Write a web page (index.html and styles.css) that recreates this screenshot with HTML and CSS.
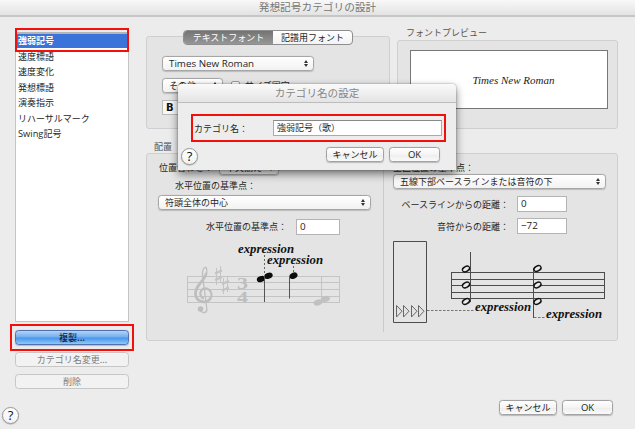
FILE: index.html
```html
<!DOCTYPE html>
<html lang="ja">
<head>
<meta charset="utf-8">
<title>発想記号カテゴリの設計</title>
<link rel="stylesheet" href="styles.css">
</head>
<body>
<div class="window">
  <header class="titlebar">発想記号カテゴリの設計</header>
  <div class="content">
    <aside class="sidebar">
      <ul class="list">
        <li class="selected">強弱記号</li><li>速度標語</li><li>速度変化</li><li>発想標語</li><li>演奏指示</li><li>リハーサルマーク</li><li><span class="latin">Swing</span>記号</li>
      </ul>
      <button class="btn primary">複製...</button>
      <button class="btn disabled">カテゴリ名変更...</button>
      <button class="btn disabled">削除</button>
    </aside>
    <main class="main">
      <div class="top">
        <section class="panel font-panel">
          <div class="tabs"><span class="tab active">テキストフォント</span><span class="tab">記譜用フォント</span></div>
          <div class="select font-name"><span class="latin">Times New Roman</span><i class="arrows"></i></div>
          <div class="row size-row"><div class="select size">その他<i class="arrows"></i></div><span class="check"></span><span>サイズ固定</span></div>
          <div class="bold">B</div>
        </section>
        <section class="preview">
          <h2 class="caption">フォントプレビュー</h2>
          <div class="panel preview-panel"><div class="sample">Times New Roman</div></div>
        </section>
      </div>
      <h2 class="caption placement-caption">配置</h2>
      <section class="panel placement">
        <div class="left-col">
          <div class="row align-row"><span>位置合わせ：</span><div class="select align">中央揃え<i class="arrows"></i></div></div>
          <div class="row hlabel">水平位置の基準点：</div>
          <div class="select anchor">符頭全体の中心<i class="arrows"></i></div>
          <div class="row hoffset"><span>水平位置の基準点：</span><span class="field">0</span></div>
          <svg class="score" width="163" height="80" viewBox="182 240 163 80">
            <g fill="none" stroke="#c4c4c4">
              <path d="M187.5 277.5H339.5M187.5 283.5H339.5M187.5 290.5H339.5M187.5 297.5H339.5M187.5 303.5H339.5M187.5 277V304M339.5 277V304M321.5 277V303"/>
              <path d="M216.5 269V286M220.5 267V284M223.5 279V295M227.500 277V293"/>
              <path stroke-width="2.200" d="M215 274.500L222 271.500M215 281L222 278M222 285L229 282M222 291.500L229 288.500"/>
            </g>
            <g fill="none" stroke="#bebebe" stroke-linecap="round">
              <path stroke-width="1.300" d="M207 311C206 315 201 314 200 311M207 311L202.500 276C202 271 204 268 206 268.500C208 271 207 276 203.500 280"/>
              <path stroke-width="2.800" d="M206 275C204 283 195 286 195.500 295C196 303 206 305 210 300"/>
              <path stroke-width="2.200" d="M210 300C215 293 206 286 201.500 291C199 295 201 298 203 299"/>
            </g>
            <circle cx="200.500" cy="310" r="2.800" fill="#bebebe"/>
            <g class="meter"><text x="237" y="289.500" textLength="11" lengthAdjust="spacingAndGlyphs">3</text><text x="237" y="303.500" textLength="11" lengthAdjust="spacingAndGlyphs">4</text></g>
            <g fill="#c1c1c1"><ellipse cx="318" cy="303.500" rx="4.500" ry="3" transform="rotate(-20 318 303.500)"/><ellipse cx="325.500" cy="300" rx="4.500" ry="3" transform="rotate(-20 325.500 300)"/></g>
            <g fill="#0c0c0c"><ellipse cx="261" cy="280" rx="4.300" ry="3" transform="rotate(-20 261 280)"/><ellipse cx="268.500" cy="276.700" rx="4.300" ry="3" transform="rotate(-20 268.500 276.700)"/><ellipse cx="293.500" cy="276.700" rx="4.200" ry="3" transform="rotate(-25 293.500 276.700)"/></g>
            <path d="M264.500 277V303M289.500 277V299.500" stroke="#555"/>
            <path d="M264.500 256V275M293.500 267V275" stroke="#666" stroke-dasharray="2 2"/>
            <text class="expr" x="238" y="254" textLength="56" lengthAdjust="spacingAndGlyphs">expression</text>
            <text class="expr" x="267" y="264.500" textLength="56" lengthAdjust="spacingAndGlyphs">expression</text>
          </svg>
        </div>
        <div class="right-col">
          <div class="row vlabel">垂直位置の基準点：</div>
          <div class="select baseline">五線下部ベースラインまたは音符の下<i class="arrows"></i></div>
          <div class="row dist"><span>ベースラインからの距離：</span><span class="field">0</span></div>
          <div class="row dist"><span>音符からの距離：</span><span class="field">−72</span></div>
          <svg class="score-right" width="220" height="92" viewBox="390 238 220 92">
            <defs><g id="half"><ellipse rx="3.700" ry="2.500" fill="#e4e4e4" stroke="#111" stroke-width="1.500" transform="rotate(-28)"/><path d="M-2.600 1.500L2.600 -1.500" stroke="#ececec" stroke-width="1.300"/></g></defs>
            <g fill="none" stroke="#4c4c4c">
              <path d="M393.500 241.500H426.500V322.500H393.500Z"/>
              <path stroke="#666" d="M396.500 305.500V317L402 311.200ZM403.500 305.500V317L409 311.200ZM411.500 305.500V317L417 311.200ZM418.500 305.500V317L424 311.200Z"/>
              <path d="M451.500 272.500H604.500M451.500 279.500H604.500M451.500 285.500H604.500M451.500 292.500H604.500M451.500 298.500H604.500M451.500 272V299M604.500 272V299M470.500 252V302M533.500 268V318"/>
              <path stroke="#777" stroke-dasharray="2.500 1.500" d="M427 310.500H474M534 317.500H546"/>
            </g>
            <use href="#half" x="466" y="269"/><use href="#half" x="466" y="285"/><use href="#half" x="466" y="301.500"/>
            <use href="#half" x="537.500" y="268.500"/><use href="#half" x="537.500" y="285"/><use href="#half" x="537.500" y="301.500"/>
            <text class="expr" x="475" y="310.700" textLength="56" lengthAdjust="spacingAndGlyphs">expression</text>
            <text class="expr" x="546" y="317.500" textLength="56" lengthAdjust="spacingAndGlyphs">expression</text>
          </svg>
        </div>
      </section>
    </main>
  </div>
  <footer class="footer"><span class="help">?</span><div class="actions"><button class="btn cancel">キャンセル</button><button class="btn ok">OK</button></div></footer>

  <div class="mark mark-item"></div>
  <div class="mark mark-copy"></div>

  <div class="dialog">
    <header class="dialog-title">カテゴリ名の設定</header>
    <div class="name-row"><span>カテゴリ名：</span><span class="name-field">強弱記号（歌）</span></div>
    <div class="dialog-foot"><span class="help">?</span><div class="actions"><button class="btn cancel">キャンセル</button><button class="btn ok">OK</button></div></div>
  </div>
</div>
</body>
</html>
```
FILE: styles.css
```css
* { box-sizing: border-box; }
body { margin: 0; background: #ececec; font: 9px/15px "Noto Sans CJK JP", sans-serif; color: #262626; white-space: nowrap; }
.window { width: 635px; height: 429px; position: relative; overflow: hidden; background: #ececec; }
.titlebar { height: 17px; border-bottom: 2px solid #c6c6c6; text-align: center; font-size: 10.7px; line-height: 14px; color: #777; background: linear-gradient(#f8f8f8, #e3e3e3); }
.latin, .field { font-family: "Open Sans", sans-serif; font-size: 9.8px; }
.content { display: flex; height: 377px; }
.row { display: flex; align-items: center; height: 15px; }

.sidebar { width: 146px; padding: 15px 17px 0 15px; display: flex; flex-direction: column; gap: 7px; }
.list { list-style: none; margin: 0 0 1px; padding: 0; height: 290px; background: #fff; border: 1px solid #c4c4c4; border-top: 2px solid #b5b5b5; line-height: 15.5px; }
.list li { padding-left: 2px; height: 15.5px; }
.list .latin { font-size: 9.3px; }
.list .selected { background: #3a73d9; color: #fff; font-weight: 700; height: 14px; margin-bottom: 0.5px; line-height: 14px; }

.btn { font: inherit; color: #222; height: 15px; padding: 0; line-height: 13px; border: 1px solid #a2a2a2; border-radius: 3.5px; background: linear-gradient(#fff, #f4f4f4 50%, #ededed 51%, #fafafa); box-shadow: 0 0.5px 1px #bbb; text-align: center; flex: none; }
.disabled { color: #7d7d7d; border-color: #c6c6c6; background: #f2f2f2; box-shadow: none; }
.primary { border-color: #526fae; background: linear-gradient(#b2d3f6, #70aef0 48%, #4793eb 52%, #8dc9fa); color: #10233c; font-weight: 500; }

.main { width: 472px; padding-top: 10px; }
.top { display: flex; gap: 7px; height: 102px; }
.panel { background: #e4e4e4; border: 1px solid #cfcfcf; border-radius: 3px; }
.font-panel { width: 244px; height: 93px; margin-top: 9px; padding-left: 15px; }
.tabs { display: flex; width: 170px; height: 15px; margin: -7px 0 11px 21px; border: 1px solid #8e8e8e; border-radius: 4px; overflow: hidden; line-height: 13px; text-align: center; background: linear-gradient(#fff, #f3f3f3); }
.tab { flex: 1; }
.tab.active { flex: none; width: 89px; background: linear-gradient(#747474, #969696); color: #fff; }
.select { position: relative; height: 15px; line-height: 13px; padding-left: 6px; border: 1px solid #a6a6a6; border-radius: 3.5px; background: linear-gradient(#fff, #f2f2f2); box-shadow: 0 0.5px 1px #bbb; }
.arrows { position: absolute; right: 5px; top: 3px; }
.arrows::before, .arrows::after { content: ""; display: block; border: 2px solid transparent; }
.arrows::before { border-top: 0; border-bottom: 3px solid #333; margin-bottom: 1px; }
.arrows::after { border-bottom: 0; border-top: 3px solid #333; }
.font-name { width: 152px; }
.size-row { margin-top: 7px; }
.select.size { width: 61px; }
.check { width: 9px; height: 9px; border: 1px solid #999; border-radius: 2px; background: #fff; margin: 0 5px 0 8px; }
.bold { width: 20px; height: 15px; margin-top: 7px; border: 1px solid #bbb; background: #f8f8f8; font: 700 10px/13px "DejaVu Sans", sans-serif; color: #111; padding-left: 3px; }
.caption { margin: 0; font-size: 9px; font-weight: 400; color: #555; line-height: 12px; }
.preview { width: 221px; }
.preview .caption { padding-left: 9px; height: 13px; }
.preview-panel { height: 89px; padding: 9px 9px 0 12px; }
.sample { height: 59px; background: #fff; border: 1px solid #777; font: italic 11px/59px "Liberation Serif", serif; text-align: center; color: #222; padding-left: 9px; }
.placement-caption { margin: 12px 0 0 8px; height: 12px; }
.placement { height: 188px; display: flex; }
.left-col { width: 237px; height: 178px; padding: 6px 0 0 11px; border-right: 1px solid #cacaca; }
.align-row > span { width: 61px; padding-left: 1px; }
.select.align { width: 60px; }
.hlabel { margin: 3px 0 2px 17px; }
.select.anchor { width: 213px; }
.hoffset { margin: 9px 0 5px 48px; }
.hoffset > span:first-child { width: 90px; }
.field { background: #fff; border: 1px solid #b4b4b4; height: 16px; width: 50px; line-height: 14px; padding-left: 3px; color: #222; }
.hoffset .field { width: 44px; }
.score { display: block; margin-left: 24px; }
.right-col { padding: 6px 0 0 9px; }
.vlabel { height: 14px; }
.select.baseline { width: 213px; margin-bottom: 7px; }
.dist { height: 16px; margin-bottom: 6px; }
.dist > span:first-child { width: 116px; text-align: right; margin-right: 8px; }
.score-right { display: block; margin: -2px 0 0 -3px; }
.expr { font: italic 700 12px "Liberation Serif", serif; fill: #111; }
.meter { font: 700 17px "Liberation Serif", serif; fill: #bebebe; }

.footer { display: flex; justify-content: space-between; padding: 6px 22px 0 2px; }
.help { width: 17px; height: 17px; border: 1px solid #999; border-radius: 50%; background: linear-gradient(#fff, #f2f2f2); box-shadow: 0 0.5px 1px #999; font: 500 13px/15px "Open Sans", sans-serif; text-align: center; color: #111; }
.footer .help { margin-top: 7px; }
.actions { display: flex; gap: 5px; }
.cancel { width: 58px; }
.ok { width: 51px; font-family: "Open Sans", sans-serif; font-size: 9.5px; }

.mark { position: absolute; border: 2px solid #f50f0a; }
.mark-item { left: 15px; top: 28px; width: 114px; height: 24px; }
.mark-copy { left: 10px; top: 324px; width: 124px; height: 27px; }

.dialog { position: absolute; left: 178px; top: 84px; width: 278px; height: 86px; background: #ededed; border-radius: 4px 4px 0 0; box-shadow: 0 4px 9px rgba(0,0,0,.5), 0 0 2px rgba(0,0,0,.4); }
.dialog-title { height: 19px; border-bottom: 1px solid #bcbcbc; border-radius: 4px 4px 0 0; background: linear-gradient(#fafafa, #e4e4e4); text-align: center; font-size: 10.6px; line-height: 18px; color: #858585; }
.name-row { margin: 11px 0 0 13px; width: 255px; height: 28px; border: 2px solid #f50f0a; display: flex; align-items: center; padding-left: 1px; }
.name-row > span:first-child { width: 79px; }
.name-field { width: 169px; height: 16px; line-height: 14px; background: #fff; border: 1px solid #aaa; border-top-color: #888; padding-left: 3px; }
.dialog-foot { display: flex; justify-content: space-between; padding: 5px 16px 0 3px; }
.dialog-foot .help { margin-top: 1px; }
```
